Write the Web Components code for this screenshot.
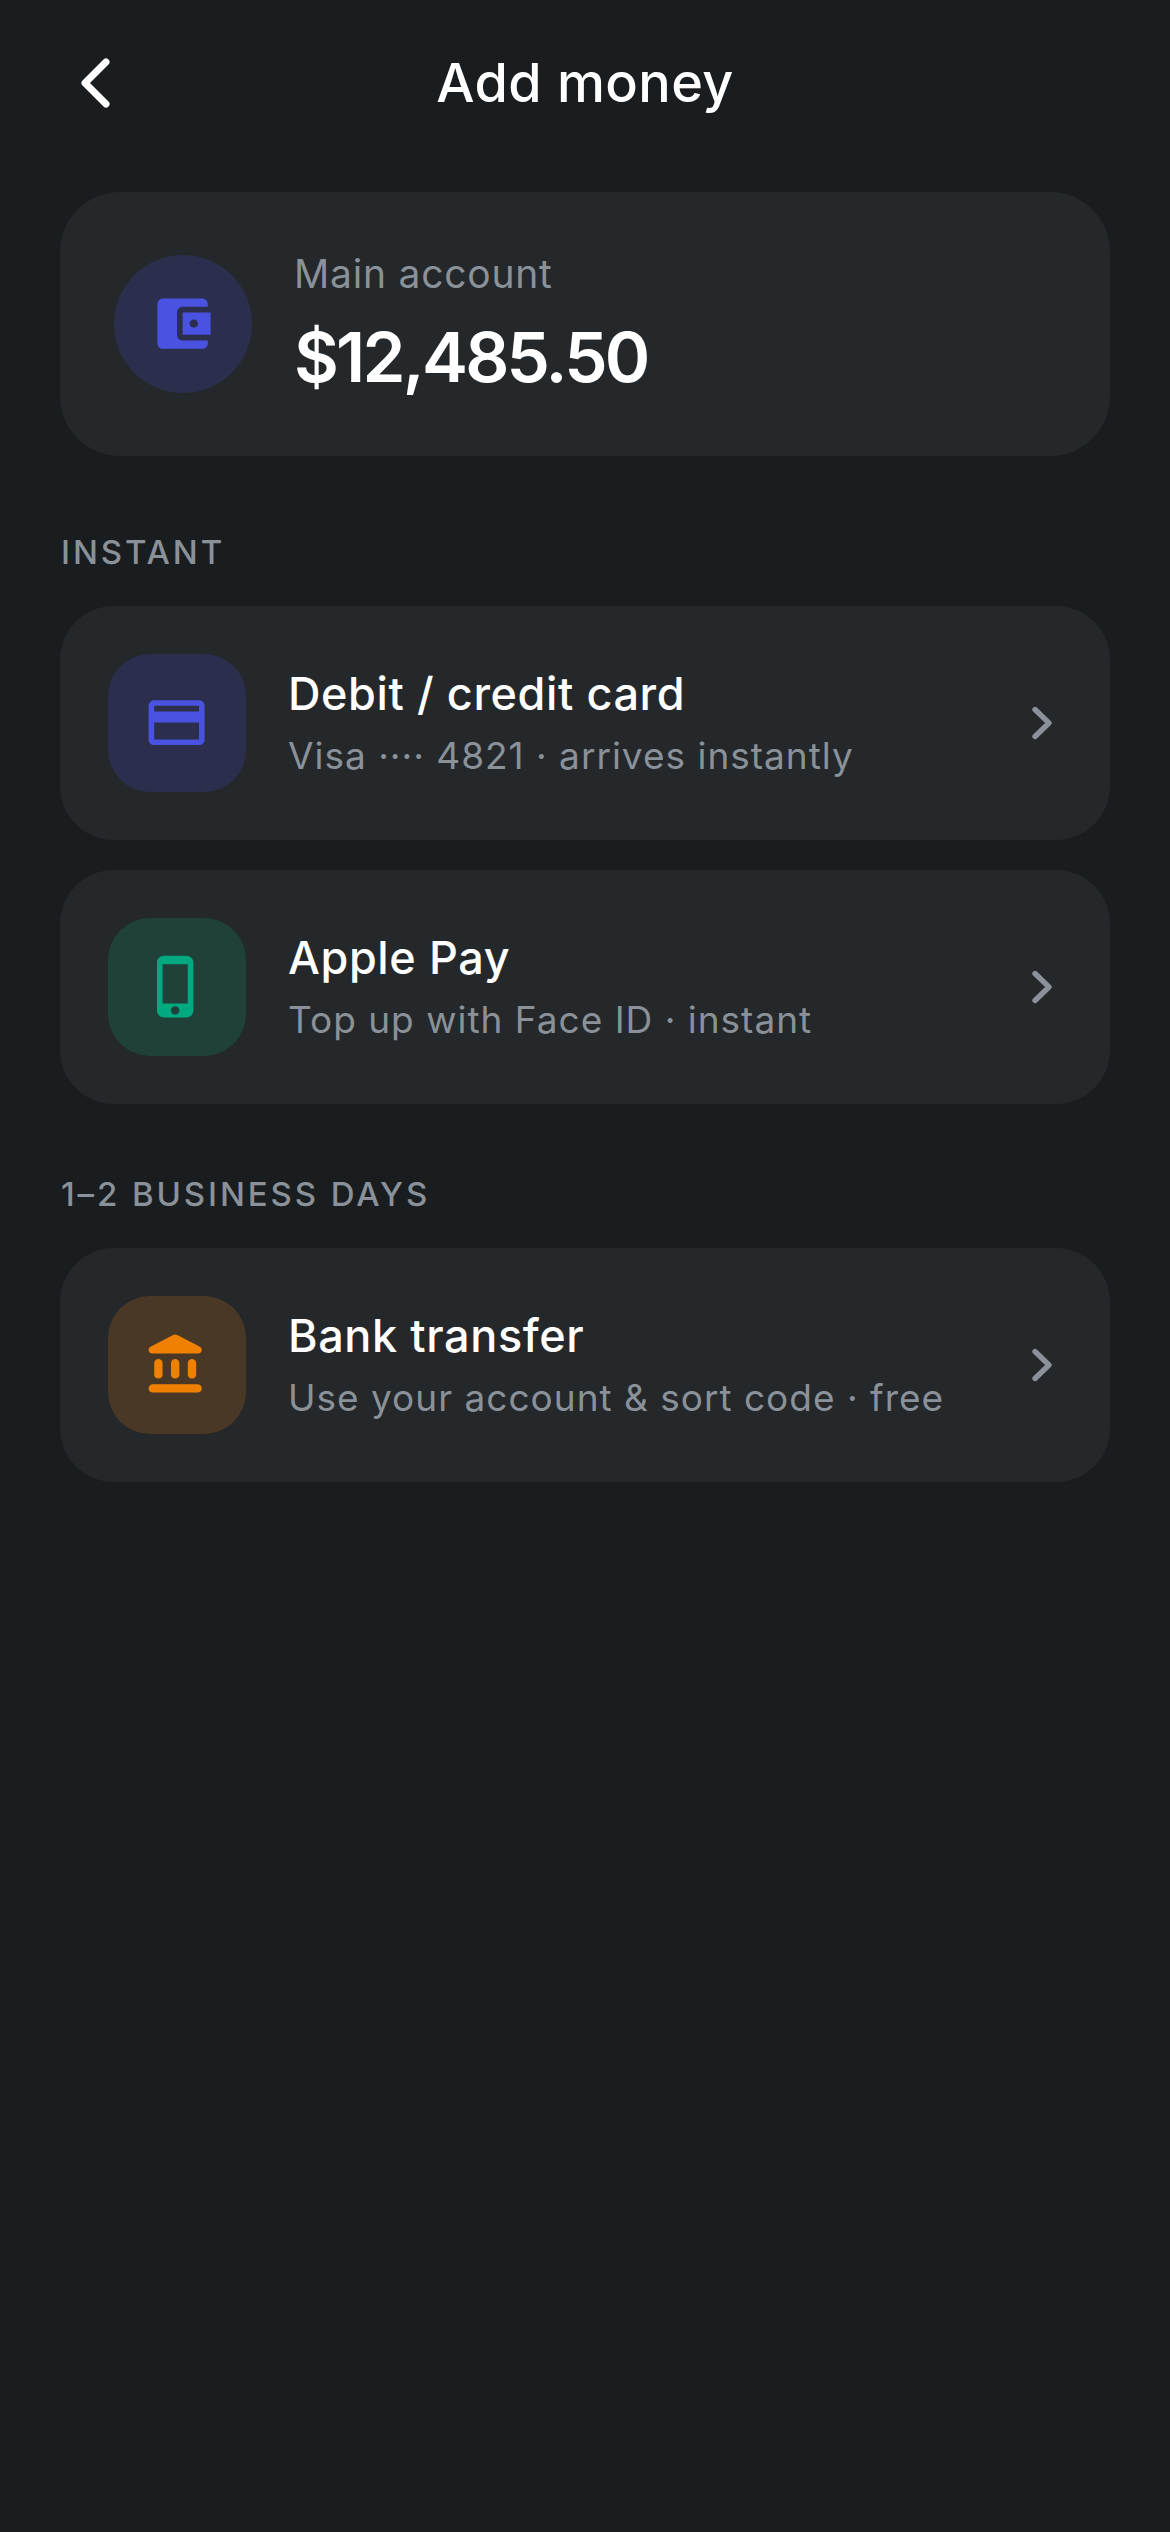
<!DOCTYPE html>
<html lang="en">
<head>
<meta charset="utf-8">
<title>Add money</title>
<style>
  html, body { margin:0; background:#191d20; }
  body { width:1170px; min-height:2532px; font-family:Inter,"Liberation Sans",sans-serif; color:#fff; }
</style>
</head>
<body>
<add-money-screen>
  <top-bar>Add money</top-bar>
  <balance-card label="Main account" amount="$12,485.50"></balance-card>

  <section-label style="--top:74px">INSTANT</section-label>
  <pay-row icon="card" tone="blue" name="Debit / credit card" detail="Visa ···· 4821 · arrives instantly"></pay-row>
  <pay-row icon="phone" tone="green" name="Apple Pay" detail="Top up with Face ID · instant" style="--top:30px"></pay-row>

  <section-label style="--top:68px">1–2 BUSINESS DAYS</section-label>
  <pay-row icon="bank" tone="orange" name="Bank transfer" detail="Use your account &amp; sort code · free"></pay-row>
</add-money-screen>

<script>
// material icons, 24 grid
const ICONS = {
  wallet: "M21 18v1c0 1.1-.9 2-2 2H5c-1.11 0-2-.9-2-2V5c0-1.1.89-2 2-2h14c1.1 0 2 .9 2 2v1h-9c-1.11 0-2 .9-2 2v8c0 1.1.89 2 2 2h9zm-9-2h10V8H12v8zm4-2.5c-.83 0-1.5-.67-1.5-1.5s.67-1.5 1.5-1.5 1.5.67 1.5 1.5-.67 1.5-1.5 1.5z",
  card: "M20 4H4c-1.11 0-1.99.89-1.99 2L2 18c0 1.11.89 2 2 2h16c1.11 0 2-.89 2-2V6c0-1.11-.89-2-2-2zm0 14H4v-6h16v6zm0-10H4V6h16v2z",
  phone: "M15.5 1h-8C6.12 1 5 2.12 5 3.5v17C5 21.88 6.12 23 7.5 23h8c1.38 0 2.5-1.12 2.5-2.5v-17C18 2.12 16.88 1 15.5 1zm-4 21c-.83 0-1.5-.67-1.5-1.5s.67-1.5 1.5-1.5 1.5.67 1.5 1.5-.67 1.5-1.5 1.5zm4.5-4H7V4h9v14z",
  bank: "M4 11.5v4c0 .83.67 1.5 1.5 1.5S7 16.33 7 15.5v-4c0-.83-.67-1.5-1.5-1.5S4 10.67 4 11.5zm6 0v4c0 .83.67 1.5 1.5 1.5s1.5-.67 1.5-1.5v-4c0-.83-.67-1.5-1.5-1.5s-1.5.67-1.5 1.5zM3.5 22h16c.83 0 1.5-.67 1.5-1.5s-.67-1.5-1.5-1.5h-16c-.83 0-1.5.67-1.5 1.5S2.67 22 3.5 22zM16 11.5v4c0 .83.67 1.5 1.5 1.5s1.5-.67 1.5-1.5v-4c0-.83-.67-1.5-1.5-1.5s-1.5.67-1.5 1.5zM10.57 1.49l-7.9 4.16c-.41.21-.67.64-.67 1.1C2 7.44 2.56 8 3.25 8h16.51C20.44 8 21 7.44 21 6.75c0-.46-.26-.89-.67-1.1l-7.9-4.16c-.58-.31-1.28-.31-1.86 0z",
};
const TONES = {
  blue: { fg: "#4a52e1", bg: "#2b2f4d" },
  green: { fg: "#00a97f", bg: "#1f4139" },
  orange: { fg: "#f08000", bg: "#493826" },
};
const glyph = (name, color) =>
  `<svg viewBox="0 0 24 24" width="67.2" height="67.2" fill="${color}" aria-hidden="true"><path d="${ICONS[name]}"/></svg>`;

class AddMoneyScreen extends HTMLElement {
  constructor() {
    super();
    this.attachShadow({ mode: "open" }).innerHTML = `
      <style>
        :host { display:flex; flex-direction:column; padding:0 60px; box-sizing:border-box; width:1170px; }
      </style>
      <slot></slot>`;
  }
}
customElements.define("add-money-screen", AddMoneyScreen);

class TopBar extends HTMLElement {
  constructor() {
    super();
    this.attachShadow({ mode: "open" }).innerHTML = `
      <style>
        :host { display:grid; grid-template-columns:1fr auto 1fr; align-items:center; height:166px; margin-bottom:26px; }
        .back { display:flex; padding-left:19px; }
        .ttl { font-size:54px; line-height:66px; font-weight:450; letter-spacing:.4px; color:#fff; }
      </style>
      <div class="back">
        <svg width="36" height="56" viewBox="0 0 36 56" fill="none" stroke="#fff" stroke-width="7" stroke-linecap="round" stroke-linejoin="round"><path d="M27 7 L6 28 L27 49"/></svg>
      </div>
      <div class="ttl"><slot></slot></div>
      <div></div>`;
  }
}
customElements.define("top-bar", TopBar);

class BalanceCard extends HTMLElement {
  constructor() {
    super();
    this.attachShadow({ mode: "open" }).innerHTML = `
      <style>
        :host { display:flex; align-items:center; gap:42px; height:264px; padding:0 54px; background:#24282b; border-radius:60px; box-sizing:border-box; }
        .ic { width:138px; height:138px; border-radius:50%; background:${TONES.blue.bg}; display:flex; align-items:center; justify-content:center; flex:none; }
        .lbl { font-size:39px; line-height:48px; letter-spacing:.78px; color:#8a9199; }
        .amt { font-size:69px; line-height:84px; font-weight:600; letter-spacing:-2.76px; color:#fff; margin-top:17px; }
      </style>
      <div class="ic">${glyph("wallet", TONES.blue.fg)}</div>
      <div>
        <div class="lbl">${this.getAttribute("label")}</div>
        <div class="amt">${this.getAttribute("amount")}</div>
      </div>`;
  }
}
customElements.define("balance-card", BalanceCard);

class SectionLabel extends HTMLElement {
  constructor() {
    super();
    this.attachShadow({ mode: "open" }).innerHTML = `
      <style>
        :host { display:block; margin:var(--top, 0) 0 32px 1px; font-size:33px; line-height:44px; font-weight:450; letter-spacing:2.9px; color:#8a9199; }
      </style>
      <slot></slot>`;
  }
}
customElements.define("section-label", SectionLabel);

class PayRow extends HTMLElement {
  constructor() {
    super();
    const tone = TONES[this.getAttribute("tone")] || TONES.blue;
    this.attachShadow({ mode: "open" }).innerHTML = `
      <style>
        :host { display:flex; align-items:center; gap:42px; height:234px; margin-top:var(--top, 0); padding:0 48px; background:#24282b; border-radius:54px; box-sizing:border-box; }
        .tile { width:138px; height:138px; border-radius:42px; background:${tone.bg}; display:flex; align-items:center; justify-content:center; flex:none; }
        .txt { flex:1; min-width:0; padding-bottom:2px; }
        .nm { font-size:45px; line-height:54px; font-weight:450; letter-spacing:.6px; color:#fff; }
        .dt { font-size:37px; line-height:44px; letter-spacing:1px; color:#8a9199; margin-top:13px; }
        .go { display:flex; flex:none; margin-right:7px; }
      </style>
      <div class="tile">${glyph(this.getAttribute("icon"), tone.fg)}</div>
      <div class="txt">
        <div class="nm">${this.getAttribute("name")}</div>
        <div class="dt">${this.getAttribute("detail")}</div>
      </div>
      <div class="go">
        <svg width="26" height="40" viewBox="0 0 26 40" fill="none" stroke="#8a9199" stroke-width="5.4" stroke-linecap="round" stroke-linejoin="round"><path d="M6 6.5 L20 20 L6 33.5"/></svg>
      </div>`;
  }
}
customElements.define("pay-row", PayRow);
</script>
</body>
</html>
